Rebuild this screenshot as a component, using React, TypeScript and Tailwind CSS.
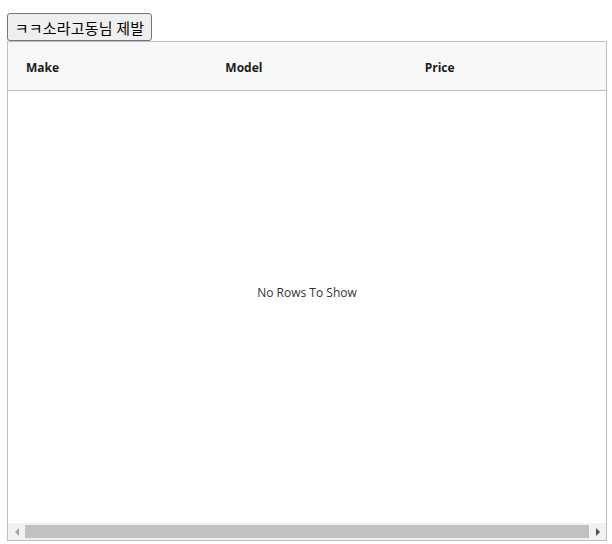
import React from "react";

const columns = ["Make", "Model", "Price"];

const App = () => {
    return (
        <div className="w-[612px] h-[544px] bg-white pt-[13px] pl-[7px]" style={{ fontFamily: '"Open Sans", "Noto Sans CJK KR", sans-serif' }}>
            <button className="h-[28px] w-[145px] px-[6px] bg-[#efefef] border border-[#767676] rounded-[3px] text-[15px] text-black leading-none tracking-[0.2px]" style={{ fontFamily: '"Noto Sans CJK KR", sans-serif' }}>
                ㅋㅋ소라고동님 제발
            </button>
            <div className="w-[600px] h-[500px] border border-[#babfc7] flex flex-col text-[#181d1f]">
                <div className="h-[49px] shrink-0 bg-[#f8f8f8] border-b border-[#babfc7] flex items-center pt-[4px]">
                    {columns.map((col) => (
                        <div key={col} className="w-[200px] pl-[18px] text-[12px] font-bold">
                            {col}
                        </div>
                    ))}
                </div>
                <div className="flex-1 flex items-center justify-center text-[12px] text-[#333] pb-[28px]">
                    No Rows To Show
                </div>
                <div className="h-[17px] shrink-0 bg-[#f1f1f1] flex items-center">
                    <div className="w-[17px] flex justify-center">
                        <svg width="6" height="8" viewBox="0 0 6 8"><path d="M5 0 L1 4 L5 8 Z" fill="#a3a3a3" /></svg>
                    </div>
                    <div className="flex-1 h-[13px] bg-[#c1c1c1]" />
                    <div className="w-[17px] flex justify-center">
                        <svg width="6" height="8" viewBox="0 0 6 8"><path d="M1 0 L5 4 L1 8 Z" fill="#505050" /></svg>
                    </div>
                </div>
            </div>
        </div>
    );
};

export default App;
